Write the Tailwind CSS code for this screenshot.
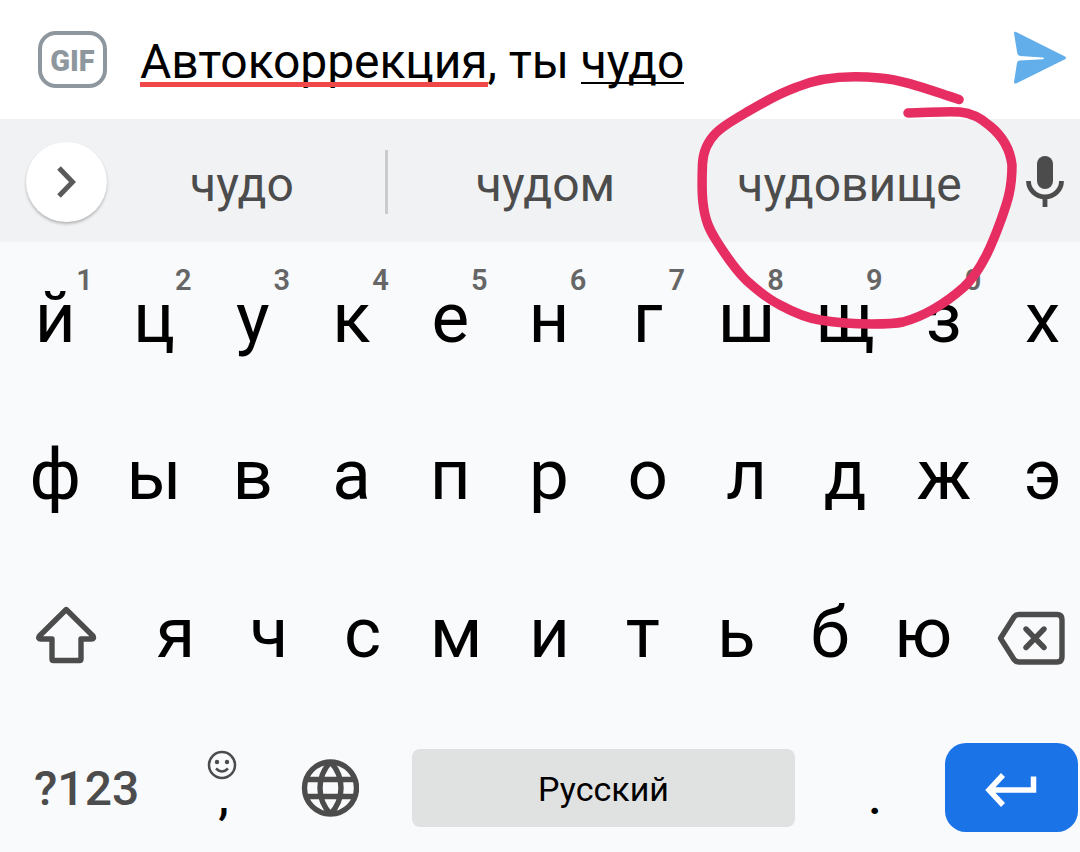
<!DOCTYPE html>
<html lang="ru">
<head>
  <meta charset="UTF-8">
  <meta name="viewport" content="width=device-width, initial-scale=1.0">
  <title>Клавиатура</title>
  <script src="https://cdn.jsdelivr.net/npm/@tailwindcss/browser@4"></script>
</head>
<body class="bg-[#f8fafc] font-['Roboto',sans-serif]">
  <div class="relative w-[1080px] h-[852px] overflow-hidden">

    <!-- Message input -->
    <div class="flex items-center h-[119px] bg-white">
      <div class="ml-[38px] w-[69px] h-[57px] border-4 border-[#8e979d] rounded-[18px] flex items-center justify-center pt-[3px] text-[29px] leading-none font-black text-[#8e979d]">GIF</div>
      <p class="ml-[33px] pt-[5px] text-[48px] leading-[56px] tracking-[-0.08px] text-black whitespace-pre"><span class="relative">Автокоррекция<span class="absolute left-0 right-0 top-[49px] h-[5px] bg-[#f04848]"></span></span>, ты <span class="relative">чудо<span class="absolute left-0 right-0 top-[49px] h-[2px] bg-black"></span></span></p>
      <svg class="ml-auto mr-[13px] -mt-[3px] w-[54px] h-[54px]" viewBox="0 0 54 54" fill="#61aeea">
        <path d="M1 2 Q1.200 .2 3.100 1 L52 25.600 Q54 27 52 28.200 L3.100 52.400 Q.9 53 1 51 L4 32 Q4.300 29.800 6.500 29.600 L30 28.300 Q32 27.300 30 26.500 L7 25 Q4.700 24.600 4.300 22.600 Z"/>
      </svg>
    </div>

    <!-- Suggestions -->
    <div class="flex items-center h-[123px] pt-[2px] bg-[#f0f2f4] text-[48px] leading-[56px] text-[#4c4c4c]">
      <button class="ml-[26px] w-[81px] h-[80px] rounded-full bg-white shadow-[0_2px_3px_rgba(0,0,0,0.25)] flex items-center justify-center">
        <svg class="w-6 h-8" viewBox="0 0 24 32" fill="none" stroke="#5a5a5a" stroke-width="5"><path d="M4 2 L17.500 16 L4 30"/></svg>
      </button>
      <span class="w-[270px] pt-[7px] text-center">чудо</span>
      <span class="ml-2 w-[3px] h-16 bg-[#c9cbcd]"></span>
      <span class="w-[315px] pt-[7px] text-center">чудом</span>
      <span class="w-[293px] pt-[7px] text-center">чудовище</span>
      <svg class="ml-[29px] w-[40px] h-[52px]" viewBox="0 0 40 52">
        <rect x="12" y="0" width="16" height="33" rx="8" fill="#4c4c4c"/>
        <path d="M3.500 25 A16.500 16 0 0 0 36.500 25 M20 41 V51" fill="none" stroke="#4c4c4c" stroke-width="4.800"/>
      </svg>
    </div>

    <!-- Letter keys -->
    <div class="ml-[6px] w-[1086px] grid grid-cols-11 h-[157px] pt-[40px] text-[71px] leading-[72px] text-center text-black">
      <div class="relative">й<span class="absolute right-[12px] -top-[19px] text-[29px] leading-[34px] font-semibold text-[#666]">1</span></div>
      <div class="relative">ц<span class="absolute right-[12px] -top-[19px] text-[29px] leading-[34px] font-semibold text-[#666]">2</span></div>
      <div class="relative">у<span class="absolute right-[12px] -top-[19px] text-[29px] leading-[34px] font-semibold text-[#666]">3</span></div>
      <div class="relative">к<span class="absolute right-[12px] -top-[19px] text-[29px] leading-[34px] font-semibold text-[#666]">4</span></div>
      <div class="relative">е<span class="absolute right-[12px] -top-[19px] text-[29px] leading-[34px] font-semibold text-[#666]">5</span></div>
      <div class="relative">н<span class="absolute right-[12px] -top-[19px] text-[29px] leading-[34px] font-semibold text-[#666]">6</span></div>
      <div class="relative">г<span class="absolute right-[12px] -top-[19px] text-[29px] leading-[34px] font-semibold text-[#666]">7</span></div>
      <div class="relative">ш<span class="absolute right-[12px] -top-[19px] text-[29px] leading-[34px] font-semibold text-[#666]">8</span></div>
      <div class="relative">щ<span class="absolute right-[12px] -top-[19px] text-[29px] leading-[34px] font-semibold text-[#666]">9</span></div>
      <div class="relative">з<span class="absolute right-[12px] -top-[19px] text-[29px] leading-[34px] font-semibold text-[#666]">0</span></div>
      <div>х</div>
    </div>
    <div class="ml-[6px] w-[1086px] grid grid-cols-11 h-[157px] pt-[40px] text-[71px] leading-[72px] text-center text-black">
      <div>ф</div><div>ы</div><div>в</div><div>а</div><div>п</div><div>р</div><div>о</div><div>л</div><div>д</div><div>ж</div><div>э</div>
    </div>
    <div class="flex h-[157px] pt-[41px]">
      <svg class="ml-[36px] mt-[9px] w-[61px] h-[58px]" viewBox="0 0 61 58" fill="none" stroke="#4c4c4c" stroke-width="5.400" stroke-linejoin="round">
        <path d="M30.200 3.500 L57 30 Q58.500 33 55.500 33 H45 V53 Q45 54.500 43.500 54.500 H17.500 Q16 54.500 16 53 V33 H5 Q1.500 33 3.400 30 Z"/>
      </svg>
      <div class="ml-[32px] w-[841px] grid grid-cols-9 text-[71px] leading-[72px] text-center text-black">
        <div>я</div><div>ч</div><div>с</div><div>м</div><div>и</div><div>т</div><div>ь</div><div>б</div><div>ю</div>
      </div>
      <svg class="ml-[27px] mt-[14px] w-[69px] h-[54px]" viewBox="0 0 69 54" fill="none" stroke="#4c4c4c" stroke-width="5.400" stroke-linejoin="round" stroke-linecap="round">
        <path d="M22 3.500 H60 Q65 3.500 65 8.500 V46 Q65 51 60 51 H22 Q19 51 17 48.500 L3.500 27.200 L17 6 Q19 3.500 22 3.500 Z"/>
        <path d="M29 18 L47 36.500 M47 18 L29 36.500"/>
      </svg>
    </div>

    <!-- Bottom row -->
    <div class="flex items-start h-[139px]">
      <span class="ml-[34px] mt-[48px] w-[106px] text-[48px] leading-[56px] font-medium text-[#4c4c4c] whitespace-nowrap">?123</span>
      <div class="ml-[50px] w-[64px] flex flex-col items-center pt-[37px]">
        <svg class="w-[30px] h-[30px]" viewBox="0 0 30 30" fill="none" stroke="#4c4c4c" stroke-width="2.500">
          <circle cx="15" cy="15" r="13"/>
          <path d="M9 18.500 Q15 24.500 21 18.500"/>
          <circle cx="10" cy="12" r="2.200" fill="#4c4c4c" stroke="none"/>
          <circle cx="20" cy="12" r="2.200" fill="#4c4c4c" stroke="none"/>
        </svg>
        <span class="-mt-[7px] ml-[3px] text-[48px] leading-[48px] font-medium text-black">,</span>
      </div>
      <svg class="ml-[47px] mt-[46px] w-[58px] h-[58px]" viewBox="0 0 58 58" fill="none" stroke="#4c4c4c" stroke-width="5.400">
        <circle cx="29.500" cy="29" r="26"/>
        <path d="M5.500 20.500 H53.500 M5.500 37.500 H53.500"/>
        <path d="M29.500 3 Q19 14 19 29 T29.500 55 M29.500 3 Q40 14 40 29 T29.500 55"/>
      </svg>
      <div class="ml-[53px] mt-[36px] w-[383px] h-[78px] rounded-lg bg-[#e0e2e1] flex items-center justify-center pt-[3px] text-[34px] text-black">Русский</div>
      <span class="ml-[48px] mt-[61px] w-16 text-center text-[48px] leading-[48px] font-medium text-black">.</span>
      <div class="ml-[38px] mt-[30px] w-[133px] h-[89px] rounded-[21px] bg-[#1b73e8] flex items-center justify-center">
        <svg class="mt-[5px] mr-[2px] w-[52px] h-[34px]" viewBox="0 0 52 34" fill="none" stroke="#fff" stroke-width="5.500">
          <path d="M48.500 3.500 V17 H4 M18 2 L4 17 L18 32"/>
        </svg>
      </div>
    </div>

    <!-- Hand-drawn circle -->
    <svg class="absolute inset-0 w-[1080px] h-[852px]" viewBox="0 0 1080 852" fill="none" stroke="#e62e62" stroke-width="9.500" stroke-linecap="round" stroke-linejoin="round">
      <path d="M959 99.500 C932 91 905 80 880 78 C850 75 823 76 797 87 C775 95 763 103 747 112 C734 120 724 125 716 133 C706 143 703 153 702.500 164 C702 178 701.500 190 703 203 C705 220 709 229 716 240 C726 256 735 269 746 280 C757 290 768 299 780 305 C793 312 806 318 820 320 C838 323 855 324 872 324 C885 324 894 324 903 322 C925 316 947 302 964 287 C982 270 993 242 1001 220 C1007 203 1012 190 1012 165 C1010 148 1001 135 990 126 C981 118 972 113 960 112 C943 111 925 113 908 113"/>
    </svg>
  </div>
</body>
</html>
